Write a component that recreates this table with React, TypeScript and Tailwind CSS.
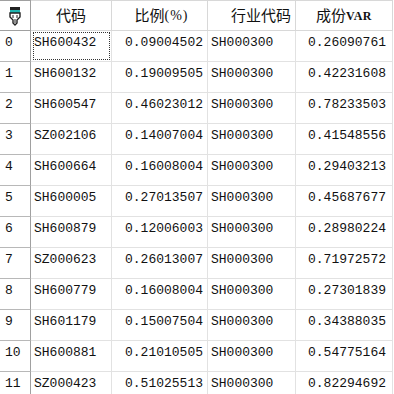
import React from 'react';

type Row = { code: string; ratio: string; ind: string; varv: string };

const rows: Row[] = [
  { code: 'SH600432', ratio: '0.09004502', ind: 'SH000300', varv: '0.26090761' },
  { code: 'SH600132', ratio: '0.19009505', ind: 'SH000300', varv: '0.42231608' },
  { code: 'SH600547', ratio: '0.46023012', ind: 'SH000300', varv: '0.78233503' },
  { code: 'SZ002106', ratio: '0.14007004', ind: 'SH000300', varv: '0.41548556' },
  { code: 'SH600664', ratio: '0.16008004', ind: 'SH000300', varv: '0.29403213' },
  { code: 'SH600005', ratio: '0.27013507', ind: 'SH000300', varv: '0.45687677' },
  { code: 'SH600879', ratio: '0.12006003', ind: 'SH000300', varv: '0.28980224' },
  { code: 'SZ000623', ratio: '0.26013007', ind: 'SH000300', varv: '0.71972572' },
  { code: 'SH600779', ratio: '0.16008004', ind: 'SH000300', varv: '0.27301839' },
  { code: 'SH601179', ratio: '0.15007504', ind: 'SH000300', varv: '0.34388035' },
  { code: 'SH600881', ratio: '0.21010505', ind: 'SH000300', varv: '0.54775164' },
  { code: 'SZ000423', ratio: '0.51025513', ind: 'SH000300', varv: '0.82294692' },
];

const mono = "font-['Liberation_Mono','Noto_Sans_CJK_SC',monospace] text-[13px] leading-4 text-[#111]";
const cjk = "font-['Noto_Sans_CJK_SC','Liberation_Serif',serif] text-[15px] text-[#111]";

function HeaderIcon() {
  return (
    <svg width="14" height="20" viewBox="0 0 14 20">
      <rect x="2" y="1" width="10" height="3" fill="#222" />
      <rect x="2" y="4" width="10" height="3" fill="#1fb5b0" />
      <path d="M2 7 H12 V11 L9 14 V17 L7 19 L5 17 V14 L2 11 Z" fill="none" stroke="#222" strokeWidth="1.4" />
      <path d="M5 9 V12 M9 9 V12 M7 13 V17" stroke="#222" strokeWidth="1" />
    </svg>
  );
}

export default function App() {
  return (
    <div className="w-[394px] h-[394px] overflow-hidden bg-white text-black">
      <div className="grid grid-cols-[31px_81px_96px_88px_97px] auto-rows-[31px]">
        <div className="flex items-center justify-center border-r border-b border-t border-[#a0a0a0] bg-white">
          <HeaderIcon />
        </div>
        <div className={`flex items-center justify-center border-r border-b border-t border-[#d8d8d8] ${cjk}`}>代码</div>
        <div className={`flex items-center justify-center pl-1 border-r border-b border-t border-[#d8d8d8] ${cjk}`}>
          比例<span className="font-['Liberation_Serif',serif] text-[14px] tracking-[1px]">(%)</span>
        </div>
        <div className={`flex items-center justify-end pr-[4px] border-r border-b border-t border-[#d8d8d8] ${cjk}`}>行业代码</div>
        <div className={`flex items-center justify-center border-r border-b border-t border-[#d8d8d8] ${cjk}`}>
          成份<span className="font-['Liberation_Serif',serif] text-[12px] font-semibold tracking-[0.5px]">VAR</span>
        </div>

        {rows.map((r, i) => (
          <React.Fragment key={i}>
            <div className={`pl-[5px] pt-1 border-r border-b border-r-[#a0a0a0] border-b-[#b8b8b8] ${mono}`}>{i}</div>
            <div className={`relative pl-[3px] pt-1 border-r border-b border-[#e2e2e2] ${mono}`}>
              {r.code}
              {i === 0 && (
                <div className="absolute left-[2px] top-[1px] right-[1px] bottom-[1px] border border-dotted border-[#333]" />
              )}
            </div>
            <div className={`pr-[4px] pt-1 text-right border-r border-b border-[#e2e2e2] ${mono}`}>{r.ratio}</div>
            <div className={`pl-[3px] pt-1 border-r border-b border-[#e2e2e2] ${mono}`}>{r.ind}</div>
            <div className={`pr-[6px] pt-1 text-right border-r border-b border-[#e2e2e2] ${mono}`}>{r.varv}</div>
          </React.Fragment>
        ))}
      </div>
    </div>
  );
}
